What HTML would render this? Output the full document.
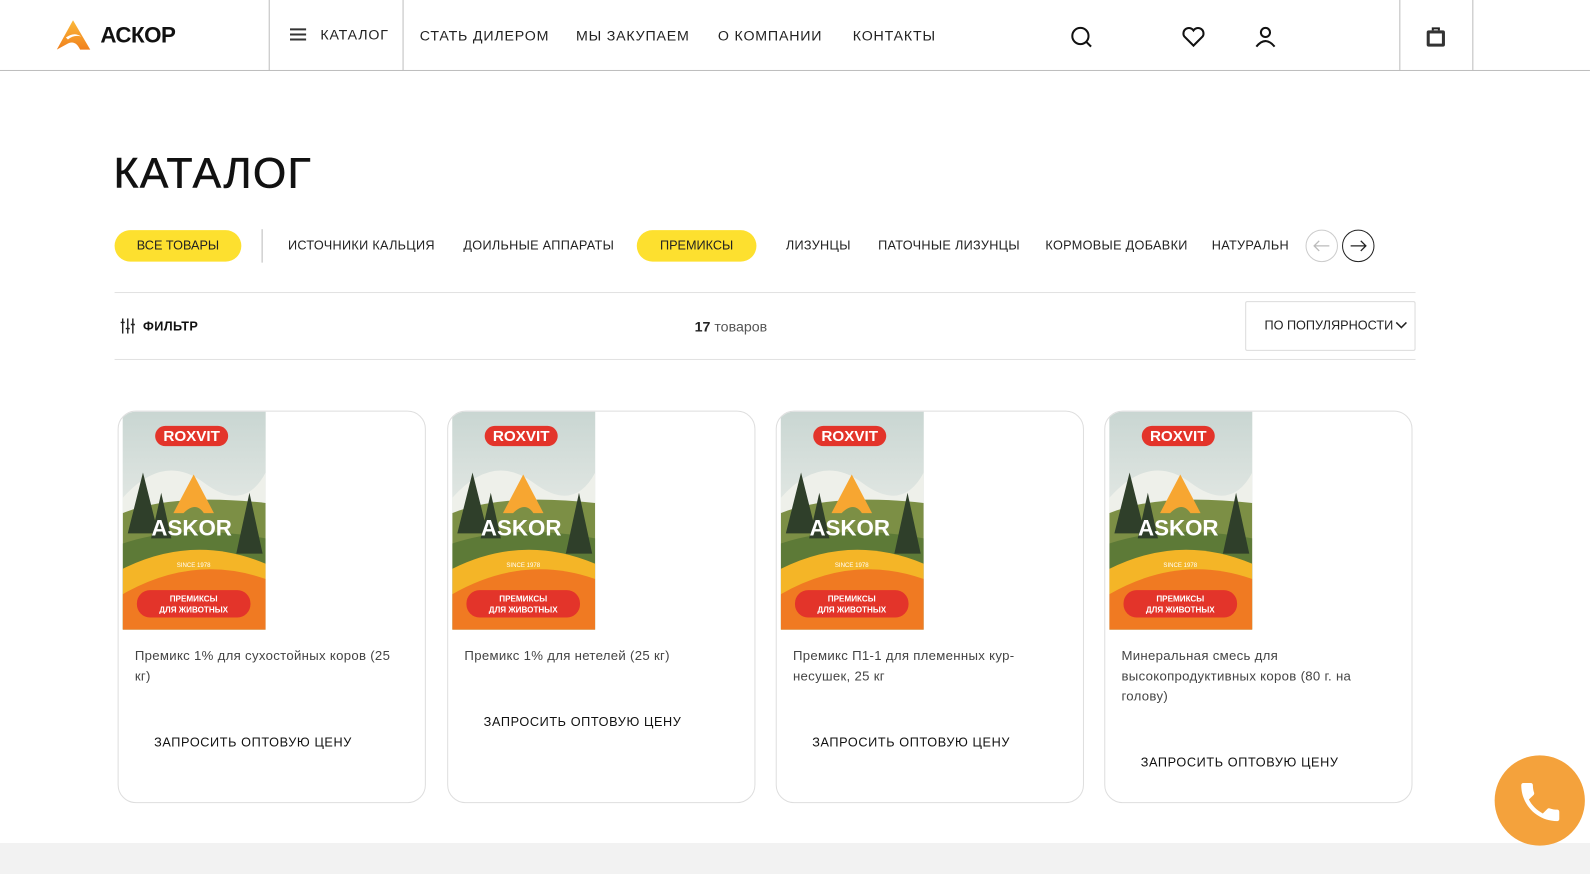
<!DOCTYPE html>
<html><head><meta charset="utf-8"><style>
*{margin:0;padding:0;box-sizing:border-box}
body{width:1590px;height:874px;overflow:hidden;background:#fff;font-family:"Liberation Sans",sans-serif;color:#111;position:relative}
#w{position:absolute;left:0;top:0;width:1568px;height:862px;transform:scale(1.014);transform-origin:0 0}
.abs{position:absolute}
.hdr{position:absolute;left:0;top:0;width:1568px;height:70px;border-bottom:1px solid #bdbdbd}
.vl{position:absolute;top:0;width:1px;height:70px;background:#bdbdbd}
.nav{position:absolute;top:27px;font-size:14px;letter-spacing:0.8px;color:#222}
.tab{position:absolute;top:235px;font-size:12.5px;letter-spacing:0.3px;color:#222}
.pill{position:absolute;top:227px;height:31px;border-radius:16px;background:#fde02f;font-size:12.5px;text-align:center;line-height:31px;color:#222}
.card{position:absolute;top:405px;width:304px;height:387px;border:1px solid #dedede;border-radius:18px;overflow:hidden}
.img{position:absolute;left:4px;top:0;width:141px;height:215px;overflow:hidden;background:linear-gradient(#c9d6d2,#e0e6e2 40%)}
.t{position:absolute;left:16px;top:231px;width:262px;font-size:13px;line-height:20px;color:#444;letter-spacing:0.3px}
.btn{position:absolute;left:35px;font-size:12.5px;letter-spacing:0.6px;color:#111}
</style></head><body>
<div class="abs" style="left:0;top:843px;width:1590px;height:31px;background:#f2f2f2"></div>
<div id="w">
<div class="hdr"></div>
<div class="vl" style="left:265px"></div><div class="vl" style="left:397px"></div>
<div class="vl" style="left:1380px"></div><div class="vl" style="left:1452px"></div>
<svg class="abs" style="left:56px;top:20px" width="34" height="30" viewBox="0 0 34 30"><defs><linearGradient id="lg" x1="0" y1="0" x2="0" y2="1"><stop offset="0" stop-color="#fbb93a"/><stop offset="1" stop-color="#f0801d"/></linearGradient></defs><path d="M16 0 L33 29 L23 29 Q18 18 9 24 L0 29 Z" fill="url(#lg)"/><path d="M9 17 Q17 11 24 16 Q17 14 11 19Z" fill="#fff"/></svg>
<div class="abs" style="left:99px;top:22px;font-size:22px;font-weight:bold;letter-spacing:-0.5px">АСКОР</div>
<svg class="abs" style="left:286px;top:27px" width="16" height="14"><path d="M0 2H16M0 7H16M0 12H16" stroke="#333" stroke-width="2"/></svg>
<div class="nav" style="left:316px;top:26px">КАТАЛОГ</div>
<div class="nav" style="left:414px">СТАТЬ ДИЛЕРОМ</div>
<div class="nav" style="left:568px">МЫ ЗАКУПАЕМ</div>
<div class="nav" style="left:708px">О КОМПАНИИ</div>
<div class="nav" style="left:841px">КОНТАКТЫ</div>
<svg class="abs" style="left:1055px;top:25px" width="24" height="24" fill="none" stroke="#111" stroke-width="2"><circle cx="10.5" cy="10.5" r="8"/><path d="M16.5 16.5L21 21"/></svg>
<svg class="abs" style="left:1165px;top:25px" width="24" height="22" fill="none" stroke="#111" stroke-width="2"><path d="M12 20L3 11A5 5 0 0 1 12 5A5 5 0 0 1 21 11Z"/></svg>
<svg class="abs" style="left:1236px;top:24px" width="24" height="24" fill="none" stroke="#111" stroke-width="2"><circle cx="12" cy="8" r="4.5"/><path d="M3 22Q12 11 21 22"/></svg>
<svg class="abs" style="left:1406px;top:25px" width="20" height="22"><path d="M7 5V3H13V5" stroke="#222" stroke-width="2" fill="none"/><rect x="1" y="5" width="18" height="16" rx="2" fill="#333"/><rect x="4" y="8" width="12" height="10" fill="#fff"/></svg>

<div class="abs" style="left:112px;top:147px;font-size:42px;letter-spacing:1.5px;color:#111;-webkit-text-stroke:0.6px #111">КАТАЛОГ</div>
<div class="pill" style="left:113px;width:125px">ВСЕ ТОВАРЫ</div>
<div class="abs" style="left:258px;top:226px;width:1px;height:33px;background:#bbb"></div>
<div class="tab" style="left:284px">ИСТОЧНИКИ КАЛЬЦИЯ</div>
<div class="tab" style="left:457px">ДОИЛЬНЫЕ АППАРАТЫ</div>
<div class="pill" style="left:628px;width:118px">ПРЕМИКСЫ</div>
<div class="tab" style="left:775px">ЛИЗУНЦЫ</div>
<div class="tab" style="left:866px">ПАТОЧНЫЕ ЛИЗУНЦЫ</div>
<div class="tab" style="left:1031px">КОРМОВЫЕ ДОБАВКИ</div>
<div class="tab" style="left:1195px;width:76px;overflow:hidden;white-space:nowrap">НАТУРАЛЬНЫЕ</div>
<svg class="abs" style="left:1287px;top:226px" width="70" height="34" fill="none"><circle cx="16.5" cy="16.5" r="15.5" stroke="#ccc"/><path d="M24 16.5H9M14 11.5L9 16.5L14 21.5" stroke="#bbb" stroke-width="1.3"/><circle cx="52.5" cy="16.5" r="15.5" stroke="#222"/><path d="M45 16.5H60M55 11.5L60 16.5L55 21.5" stroke="#222" stroke-width="1.3"/></svg>

<div class="abs" style="left:113px;top:288px;width:1283px;height:1px;background:#e2e2e2"></div>
<div class="abs" style="left:113px;top:354px;width:1283px;height:1px;background:#e2e2e2"></div>
<svg class="abs" style="left:118px;top:314px" width="16" height="15" stroke="#222" stroke-width="1.4"><path d="M3 0V15M8 0V15M13 0V15M1 4H5M6 10H10M11 6H15"/></svg>
<div class="abs" style="left:141px;top:315px;font-size:12.5px;font-weight:bold;letter-spacing:0.4px">ФИЛЬТР</div>
<div class="abs" style="left:685px;top:314px;font-size:14px;color:#555"><b style="color:#222">17</b> товаров</div>
<div class="abs" style="left:1228px;top:297px;width:168px;height:49px;border:1px solid #dcdcdc;border-radius:2px"></div>
<div class="abs" style="left:1247px;top:314px;font-size:12.5px;letter-spacing:0px;color:#222">ПО ПОПУЛЯРНОСТИ</div>
<svg class="abs" style="left:1376px;top:317px" width="12" height="8" fill="none" stroke="#222" stroke-width="1.5"><path d="M1 1L6 6L11 1"/></svg>

<div class="card" style="left:116px"><div class="img"><svg width="141" height="215" viewBox="0 0 141 215"><path d="M0 85Q40 40 80 70T141 60V215H0Z" fill="#eef0ea"/><path d="M0 100Q50 80 141 90V215H0Z" fill="#7c8f45"/><path d="M0 130Q60 110 141 125V215H0Z" fill="#5d7a37"/><path d="M0 155Q70 120 141 150V215H0Z" fill="#f4b527"/><path d="M0 180Q70 140 141 165V215H0Z" fill="#f07a22"/><path d="M20 60L5 120H35Z M38 80L28 125H48Z M125 80L112 140H138Z" fill="#2f3f2a"/><path d="M70 62L90 100H80Q72 88 60 100H50Z" fill="#f7a631"/><rect x="32" y="14" width="72" height="20" rx="10" fill="#e3342a"/><text x="68" y="29" font-size="15" font-weight="bold" fill="#fff" text-anchor="middle" font-family="Liberation Sans">ROXVIT</text><text x="68" y="122" font-size="22" font-weight="bold" fill="#fff" text-anchor="middle" font-family="Liberation Sans">ASKOR</text><text x="70" y="153" font-size="6" fill="#fff" text-anchor="middle" font-family="Liberation Sans">SINCE 1978</text><rect x="14" y="176" width="112" height="27" rx="13" fill="#e3342a"/><text x="70" y="187" font-size="8" font-weight="bold" fill="#fff" text-anchor="middle" font-family="Liberation Sans">ПРЕМИКСЫ</text><text x="70" y="198" font-size="8" font-weight="bold" fill="#fff" text-anchor="middle" font-family="Liberation Sans">ДЛЯ ЖИВОТНЫХ</text></svg></div><div class="t">Премикс 1% для сухостойных коров (25 кг)</div><div class="btn" style="top:319px">ЗАПРОСИТЬ ОПТОВУЮ ЦЕНУ</div></div>

<div class="card" style="left:441px"><div class="img"><svg width="141" height="215" viewBox="0 0 141 215"><path d="M0 85Q40 40 80 70T141 60V215H0Z" fill="#eef0ea"/><path d="M0 100Q50 80 141 90V215H0Z" fill="#7c8f45"/><path d="M0 130Q60 110 141 125V215H0Z" fill="#5d7a37"/><path d="M0 155Q70 120 141 150V215H0Z" fill="#f4b527"/><path d="M0 180Q70 140 141 165V215H0Z" fill="#f07a22"/><path d="M20 60L5 120H35Z M38 80L28 125H48Z M125 80L112 140H138Z" fill="#2f3f2a"/><path d="M70 62L90 100H80Q72 88 60 100H50Z" fill="#f7a631"/><rect x="32" y="14" width="72" height="20" rx="10" fill="#e3342a"/><text x="68" y="29" font-size="15" font-weight="bold" fill="#fff" text-anchor="middle" font-family="Liberation Sans">ROXVIT</text><text x="68" y="122" font-size="22" font-weight="bold" fill="#fff" text-anchor="middle" font-family="Liberation Sans">ASKOR</text><text x="70" y="153" font-size="6" fill="#fff" text-anchor="middle" font-family="Liberation Sans">SINCE 1978</text><rect x="14" y="176" width="112" height="27" rx="13" fill="#e3342a"/><text x="70" y="187" font-size="8" font-weight="bold" fill="#fff" text-anchor="middle" font-family="Liberation Sans">ПРЕМИКСЫ</text><text x="70" y="198" font-size="8" font-weight="bold" fill="#fff" text-anchor="middle" font-family="Liberation Sans">ДЛЯ ЖИВОТНЫХ</text></svg></div><div class="t">Премикс 1% для нетелей (25 кг)</div><div class="btn" style="top:299px">ЗАПРОСИТЬ ОПТОВУЮ ЦЕНУ</div></div>

<div class="card" style="left:765px"><div class="img"><svg width="141" height="215" viewBox="0 0 141 215"><path d="M0 85Q40 40 80 70T141 60V215H0Z" fill="#eef0ea"/><path d="M0 100Q50 80 141 90V215H0Z" fill="#7c8f45"/><path d="M0 130Q60 110 141 125V215H0Z" fill="#5d7a37"/><path d="M0 155Q70 120 141 150V215H0Z" fill="#f4b527"/><path d="M0 180Q70 140 141 165V215H0Z" fill="#f07a22"/><path d="M20 60L5 120H35Z M38 80L28 125H48Z M125 80L112 140H138Z" fill="#2f3f2a"/><path d="M70 62L90 100H80Q72 88 60 100H50Z" fill="#f7a631"/><rect x="32" y="14" width="72" height="20" rx="10" fill="#e3342a"/><text x="68" y="29" font-size="15" font-weight="bold" fill="#fff" text-anchor="middle" font-family="Liberation Sans">ROXVIT</text><text x="68" y="122" font-size="22" font-weight="bold" fill="#fff" text-anchor="middle" font-family="Liberation Sans">ASKOR</text><text x="70" y="153" font-size="6" fill="#fff" text-anchor="middle" font-family="Liberation Sans">SINCE 1978</text><rect x="14" y="176" width="112" height="27" rx="13" fill="#e3342a"/><text x="70" y="187" font-size="8" font-weight="bold" fill="#fff" text-anchor="middle" font-family="Liberation Sans">ПРЕМИКСЫ</text><text x="70" y="198" font-size="8" font-weight="bold" fill="#fff" text-anchor="middle" font-family="Liberation Sans">ДЛЯ ЖИВОТНЫХ</text></svg></div><div class="t" style="width:240px">Премикс П1-1 для племенных кур-несушек, 25 кг</div><div class="btn" style="top:319px">ЗАПРОСИТЬ ОПТОВУЮ ЦЕНУ</div></div>

<div class="card" style="left:1089px"><div class="img"><svg width="141" height="215" viewBox="0 0 141 215"><path d="M0 85Q40 40 80 70T141 60V215H0Z" fill="#eef0ea"/><path d="M0 100Q50 80 141 90V215H0Z" fill="#7c8f45"/><path d="M0 130Q60 110 141 125V215H0Z" fill="#5d7a37"/><path d="M0 155Q70 120 141 150V215H0Z" fill="#f4b527"/><path d="M0 180Q70 140 141 165V215H0Z" fill="#f07a22"/><path d="M20 60L5 120H35Z M38 80L28 125H48Z M125 80L112 140H138Z" fill="#2f3f2a"/><path d="M70 62L90 100H80Q72 88 60 100H50Z" fill="#f7a631"/><rect x="32" y="14" width="72" height="20" rx="10" fill="#e3342a"/><text x="68" y="29" font-size="15" font-weight="bold" fill="#fff" text-anchor="middle" font-family="Liberation Sans">ROXVIT</text><text x="68" y="122" font-size="22" font-weight="bold" fill="#fff" text-anchor="middle" font-family="Liberation Sans">ASKOR</text><text x="70" y="153" font-size="6" fill="#fff" text-anchor="middle" font-family="Liberation Sans">SINCE 1978</text><rect x="14" y="176" width="112" height="27" rx="13" fill="#e3342a"/><text x="70" y="187" font-size="8" font-weight="bold" fill="#fff" text-anchor="middle" font-family="Liberation Sans">ПРЕМИКСЫ</text><text x="70" y="198" font-size="8" font-weight="bold" fill="#fff" text-anchor="middle" font-family="Liberation Sans">ДЛЯ ЖИВОТНЫХ</text></svg></div><div class="t" style="width:245px">Минеральная смесь для высокопродуктивных коров (80 г. на голову)</div><div class="btn" style="top:339px">ЗАПРОСИТЬ ОПТОВУЮ ЦЕНУ</div></div>

<div class="abs" style="left:1474px;top:745px;width:89px;height:89px;border-radius:50%;background:#f4a23c"></div>
<svg class="abs" style="left:1494px;top:766px" width="50" height="50" viewBox="0 0 24 24"><path fill="#fff" d="M6.6 10.8c1.4 2.8 3.8 5.1 6.6 6.6l2.2-2.2c.3-.3.7-.4 1-.2 1.1.4 2.300.6 3.6.6.6 0 1 .4 1 1V20c0 .6-.4 1-1 1C10.6 21 3 13.4 3 4c0-.6.4-1 1-1h3.5c.6 0 1 .4 1 1 0 1.3.2 2.5.6 3.6.1.3 0 .7-.2 1z"/></svg>
</div>
</body></html>
